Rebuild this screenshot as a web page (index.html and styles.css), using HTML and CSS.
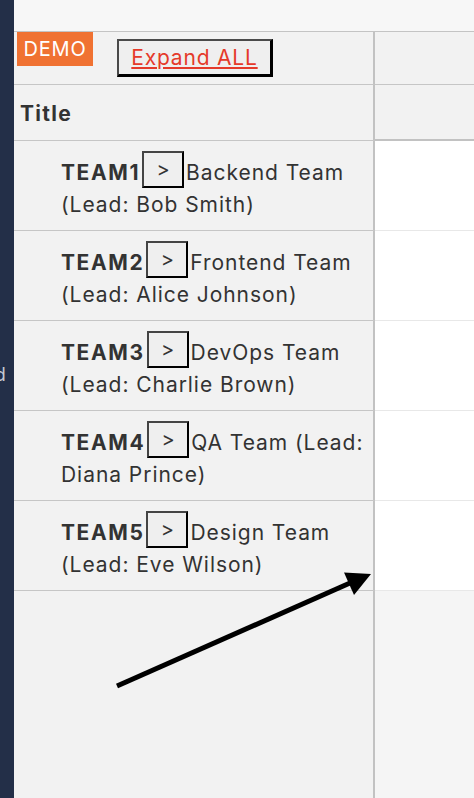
FILE: index.html
```html
<!DOCTYPE html>
<html>
<head>
<meta charset="utf-8">
<link rel="stylesheet" href="styles.css">
</head>
<body>
<div class="app">
  <aside class="sidebar"><span class="side-label">Field</span></aside>
  <main class="main">
    <div class="topbar"></div>
    <div class="grid">
      <div class="cell head1 left"><span class="demo">DEMO</span><button class="expand">Expand ALL</button></div>
      <div class="cell head1 right"></div>
      <div class="cell head2 left"><span class="title">Title</span></div>
      <div class="cell head2 right"></div>

      <div class="cell row left"><div class="row-text"><b>TEAM1</b><button class="toggle">&gt;</button>Backend Team (Lead: Bob Smith)</div></div>
      <div class="cell row right"></div>
      <div class="cell row left"><div class="row-text"><b>TEAM2</b><button class="toggle">&gt;</button>Frontend Team (Lead: Alice Johnson)</div></div>
      <div class="cell row right"></div>
      <div class="cell row left"><div class="row-text"><b>TEAM3</b><button class="toggle">&gt;</button>DevOps Team (Lead: Charlie Brown)</div></div>
      <div class="cell row right"></div>
      <div class="cell row left"><div class="row-text"><b>TEAM4</b><button class="toggle">&gt;</button>QA Team (Lead: Diana Prince)</div></div>
      <div class="cell row right"></div>
      <div class="cell row left"><div class="row-text"><b>TEAM5</b><button class="toggle">&gt;</button>Design Team (Lead: Eve Wilson)</div></div>
      <div class="cell row right"></div>

      <div class="cell fill left"></div>
      <div class="cell fill right"></div>
    </div>
    <svg class="arrow" width="474" height="798" viewBox="0 0 474 798">
      <line x1="117" y1="686" x2="350" y2="583" stroke="#000" stroke-width="5"/>
      <polygon points="371,574 344,572.5 354,595" fill="#000"/>
    </svg>
  </main>
</div>
</body>
</html>
```

FILE: styles.css
```css
* { box-sizing: border-box; }
html, body { margin: 0; padding: 0; }
body {
  width: 474px;
  height: 798px;
  overflow: hidden;
  font-family: Inter, "Liberation Sans", sans-serif;
  color: #333;
}
.app {
  display: flex;
  height: 798px;
}
.sidebar {
  width: 14px;
  flex: none;
  background: #232f48;
  overflow: hidden;
  padding-top: 364px;
}
.side-label {
  display: block;
  margin-left: -35px;
  font-size: 18px;
  color: #c6cad2;
  white-space: nowrap;
}
.main {
  flex: 1;
  display: flex;
  flex-direction: column;
  background: #f2f2f2;
}
.topbar {
  height: 32px;
  flex: none;
  background: #f7f7f7;
  border-bottom: 1px solid #c4c4c4;
}
.grid {
  flex: 1;
  display: grid;
  grid-template-columns: 361px 1fr;
  grid-template-rows: 53px 56px repeat(5, 90px) 1fr;
}
.cell { border-bottom: 1px solid #c6c6c6; }
.left { border-right: 2px solid #c2c2c2; background: #f2f2f2; }
.right { background: #fff; }
.head1.right, .head2.right { background: #f2f2f2; }
.head2.right { border-bottom: 2px solid #c2c2c2; }
.row.right { border-bottom-color: #e8e8e8; }
.fill { border-bottom: none; }
.fill.right { background: #f5f5f5; }

.head1 {
  display: flex;
  align-items: flex-start;
  padding-left: 3px;
}
.demo {
  width: 76px;
  text-align: center;
  background: #f07232;
  color: #fff;
  font-size: 20px;
  line-height: 34px;
  height: 34px;
  letter-spacing: 0.8px;
}
.expand {
  margin: 7px 0 0 24px;
  width: 156px;
  height: 38px;
  padding: 0;
  background: #efefef;
  border-style: solid;
  border-width: 2px 3px 3px 2px;
  border-color: #4a4a4a #000 #000 #4a4a4a;
  color: #e53a2a;
  text-decoration: underline;
  font-family: Inter, "Liberation Sans", sans-serif;
  font-size: 21px;
  letter-spacing: 0.8px;
}
.head2 {
  display: flex;
  align-items: center;
  padding-left: 6px;
  padding-top: 2px;
}
.title {
  font-weight: 700;
  font-size: 21px;
  letter-spacing: 1.3px;
}
.row.left {
  padding: 10px 4px 0 47px;
}
.row-text {
  font-size: 21px;
  line-height: 32px;
  letter-spacing: 0.95px;
}
.row-text b { font-weight: 700; letter-spacing: 1.6px; }
.toggle {
  display: inline-block;
  margin: 0 2px 0 2px;
  width: 42px;
  height: 37px;
  padding: 0;
  line-height: 33px;
  vertical-align: 4px;
  background: #efefef;
  border-style: solid;
  border-width: 2px;
  border-color: #444 #000 #000 #444;
  color: #333;
  font-family: Inter, "Liberation Sans", sans-serif;
  font-size: 20px;
  letter-spacing: 0;
}
.arrow {
  position: absolute;
  left: 0;
  top: 0;
  pointer-events: none;
}
```
